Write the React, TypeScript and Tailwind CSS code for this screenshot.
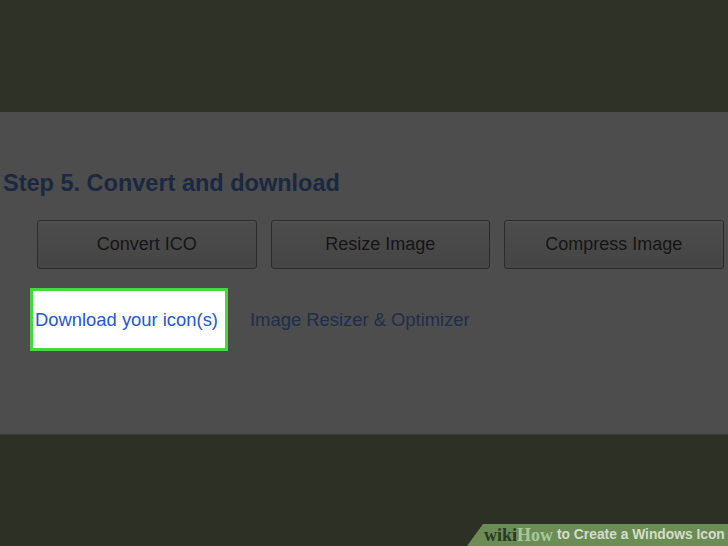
export default function App() {
  const buttons = ["Convert ICO", "Resize Image", "Compress Image"];

  return (
    <div className="flex h-[546px] w-[728px] flex-col overflow-hidden bg-[#2d3126] font-['Liberation_Sans',Arial,sans-serif]">
      <div className="h-[112px] shrink-0 bg-[#2e3227]" />

      <div className="h-[322px] shrink-0 bg-[#4d4d4d] pl-[3px] pt-[58px]">
        <h1 className="text-[23.5px] leading-[27px] font-bold text-[#1a2840]">
          Step 5. Convert and download
        </h1>

        <div className="mt-[23px] flex gap-[14px] pl-[34px]">
          {buttons.map((label) => (
            <button
              key={label}
              className="h-[49px] w-[219.5px] rounded-[3px] border border-[#2b2b2b] bg-gradient-to-b from-[#4c4c4c] to-[#454545] text-[18px] text-[#151515] shadow-[inset_0_1px_0_#555]"
            >
              {label}
            </button>
          ))}
        </div>

        <div className="mt-[19px] flex items-center pl-[27px]">
          <div className="flex h-[63px] w-[198px] items-center border-[3px] border-[#45d845] bg-white pl-[2px]">
            <span className="text-[18.4px] text-[#2457d0]">Download your icon(s)</span>
          </div>
          <span className="ml-[22px] text-[18.4px] text-[#1e2d4b]">Image Resizer &amp; Optimizer</span>
        </div>
      </div>

      <div className="flex flex-1 items-end justify-end border-t border-[#3a3d35] bg-[#2d3125]">
        <div className="flex h-[22px] w-[261px] items-center bg-[#6b8c54] pl-[17px] [clip-path:polygon(16px_0,100%_0,100%_100%,0_100%)]">
          <span className="font-['Liberation_Serif',serif] text-[18px] font-bold leading-none text-[#2b3a23]">wiki</span>
          <span className="font-['Liberation_Serif',serif] text-[18px] font-bold leading-none text-[#a9c79a]">How</span>
          <span className="ml-[4px] text-[13.8px] font-bold leading-none text-[#d3ddcc]">to Create a Windows Icon</span>
        </div>
      </div>
    </div>
  );
}
